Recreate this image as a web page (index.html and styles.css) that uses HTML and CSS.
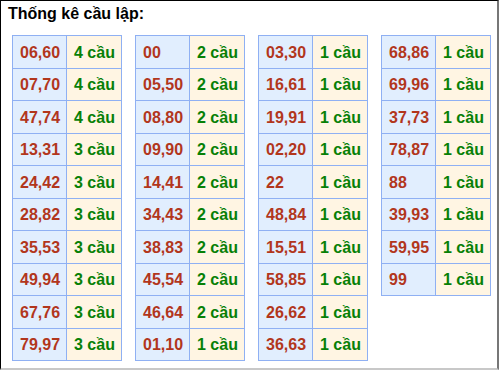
FILE: index.html
```html
<!DOCTYPE html>
<html>
<head>
<meta charset="utf-8">
<link rel="stylesheet" href="styles.css">
</head>
<body>
<div class="frame">
  <div class="title">Thống kê cầu lập:</div>
  <div class="tables">
    <table class="tbl">
      <tr><td class="num">06,60</td><td class="cnt">4 cầu</td></tr>
      <tr><td class="num">07,70</td><td class="cnt">4 cầu</td></tr>
      <tr><td class="num">47,74</td><td class="cnt">4 cầu</td></tr>
      <tr><td class="num">13,31</td><td class="cnt">3 cầu</td></tr>
      <tr><td class="num">24,42</td><td class="cnt">3 cầu</td></tr>
      <tr><td class="num">28,82</td><td class="cnt">3 cầu</td></tr>
      <tr><td class="num">35,53</td><td class="cnt">3 cầu</td></tr>
      <tr><td class="num">49,94</td><td class="cnt">3 cầu</td></tr>
      <tr><td class="num">67,76</td><td class="cnt">3 cầu</td></tr>
      <tr><td class="num">79,97</td><td class="cnt">3 cầu</td></tr>
    </table>
    <table class="tbl">
      <tr><td class="num">00</td><td class="cnt">2 cầu</td></tr>
      <tr><td class="num">05,50</td><td class="cnt">2 cầu</td></tr>
      <tr><td class="num">08,80</td><td class="cnt">2 cầu</td></tr>
      <tr><td class="num">09,90</td><td class="cnt">2 cầu</td></tr>
      <tr><td class="num">14,41</td><td class="cnt">2 cầu</td></tr>
      <tr><td class="num">34,43</td><td class="cnt">2 cầu</td></tr>
      <tr><td class="num">38,83</td><td class="cnt">2 cầu</td></tr>
      <tr><td class="num">45,54</td><td class="cnt">2 cầu</td></tr>
      <tr><td class="num">46,64</td><td class="cnt">2 cầu</td></tr>
      <tr><td class="num">01,10</td><td class="cnt">1 cầu</td></tr>
    </table>
    <table class="tbl">
      <tr><td class="num">03,30</td><td class="cnt">1 cầu</td></tr>
      <tr><td class="num">16,61</td><td class="cnt">1 cầu</td></tr>
      <tr><td class="num">19,91</td><td class="cnt">1 cầu</td></tr>
      <tr><td class="num">02,20</td><td class="cnt">1 cầu</td></tr>
      <tr><td class="num">22</td><td class="cnt">1 cầu</td></tr>
      <tr><td class="num">48,84</td><td class="cnt">1 cầu</td></tr>
      <tr><td class="num">15,51</td><td class="cnt">1 cầu</td></tr>
      <tr><td class="num">58,85</td><td class="cnt">1 cầu</td></tr>
      <tr><td class="num">26,62</td><td class="cnt">1 cầu</td></tr>
      <tr><td class="num">36,63</td><td class="cnt">1 cầu</td></tr>
    </table>
    <table class="tbl">
      <tr><td class="num">68,86</td><td class="cnt">1 cầu</td></tr>
      <tr><td class="num">69,96</td><td class="cnt">1 cầu</td></tr>
      <tr><td class="num">37,73</td><td class="cnt">1 cầu</td></tr>
      <tr><td class="num">78,87</td><td class="cnt">1 cầu</td></tr>
      <tr><td class="num">88</td><td class="cnt">1 cầu</td></tr>
      <tr><td class="num">39,93</td><td class="cnt">1 cầu</td></tr>
      <tr><td class="num">59,95</td><td class="cnt">1 cầu</td></tr>
      <tr><td class="num">99</td><td class="cnt">1 cầu</td></tr>
    </table>
  </div>
</div>
</body>
</html>
```
FILE: styles.css
```css
html, body {
  margin: 0;
  padding: 0;
  background: #fff;
}
.frame {
  box-sizing: border-box;
  width: 499px;
  height: 370px;
  border-top: 1px solid #000;
  border-left: 1px solid #000;
  border-right: 2px solid #777;
  border-bottom: 2px solid #c8c8c8;
  padding: 4px 0 0 7px;
  font-family: "Liberation Sans", Arial, sans-serif;
  overflow: hidden;
}
.title {
  font-size: 16px;
  font-weight: bold;
  line-height: 18px;
  color: #000;
}
.tables {
  display: flex;
  align-items: flex-start;
  gap: 13px;
  margin-top: 12px;
  padding-left: 4px;
}
.tbl {
  border-collapse: collapse;
  width: 109px;
  table-layout: fixed;
}
.tbl td {
  border: 1px solid #8fb0f3;
  height: 32.5px;
  padding: 2px 0 0 7px;
  box-sizing: border-box;
  font-size: 16px;
  font-weight: bold;
  line-height: 18px;
  white-space: nowrap;
}
.num {
  width: 54px;
  background: #e1eefe;
  color: #b2361c;
}
.cnt {
  width: 55px;
  background: #fff5e3;
  color: #078007;
}
```
